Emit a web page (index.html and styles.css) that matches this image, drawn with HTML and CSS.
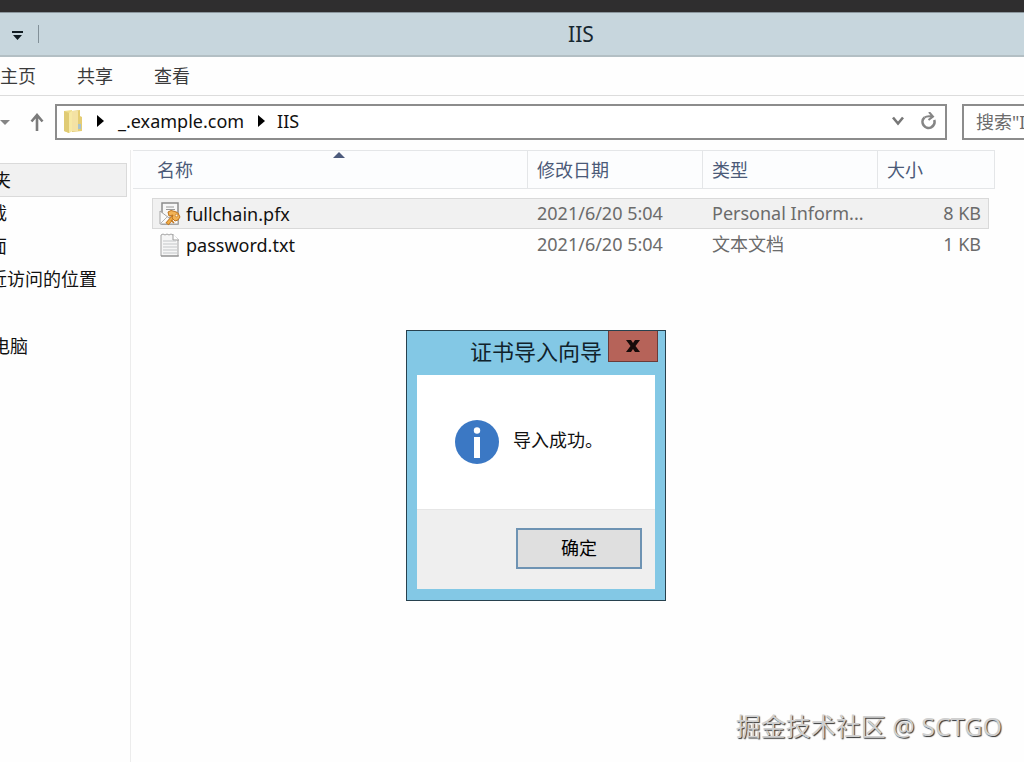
FILE: index.html
```html
<!doctype html>
<html lang="zh-CN">
<head>
  <meta charset="utf-8">
  <title>IIS</title>
  <link rel="stylesheet" href="styles.css">
</head>
<body>
  <div class="desktop-edge"></div>
  <header class="titlebar">
    <button class="quick" aria-label="自定义快速访问工具栏">
      <svg width="12" height="10" viewBox="0 0 12 10"><path d="M0 0h11v2H0zM1 4h9L5.500 9z" fill="#111c22"/></svg>
    </button>
    <h1>IIS</h1>
  </header>
  <nav class="ribbon">
    <a href="#home">主页</a>
    <a href="#share">共享</a>
    <a href="#view">查看</a>
  </nav>
  <div class="toolbar">
    <button class="history" aria-label="最近浏览的位置">
      <svg width="10" height="5" viewBox="0 0 10 5"><path d="M0 0h10L5 5z" fill="#858585"/></svg>
    </button>
    <button class="up" aria-label="向上">
      <svg width="14" height="18" viewBox="0 0 14 18"><path d="M7 18V2M1.500 8.500L7 2l5.500 6.500" fill="none" stroke="#7b7b7b" stroke-width="2.600"/></svg>
    </button>
    <div class="address">
      <svg class="folder" width="20" height="24" viewBox="0 0 20 24">
        <path d="M9 2l8-1v6l2 1v14l-10 1z" fill="#e5cd74"/>
        <path d="M8 2h7v20H8z" fill="#f4e2a4"/>
        <path d="M1 2l8-1v21l-3 2-5-2z" fill="#eedd8c"/>
        <path d="M1 2l5 2v20l-5-2z" fill="#e0cb74"/>
        <path d="M6 4l3-2v20l-3 2z" fill="#f7e9a5"/>
        <path d="M15 15h3v5h-3z" fill="#a9c3cc"/>
      </svg>
      <svg class="sep" width="7" height="12" viewBox="0 0 7 12"><path d="M0 0l7 6-7 6z"/></svg>
      <a href="#example">_.example.com</a>
      <svg class="sep" width="7" height="12" viewBox="0 0 7 12"><path d="M0 0l7 6-7 6z"/></svg>
      <a href="#iis">IIS</a>
      <div class="address-tools">
        <button aria-label="以前的位置">
          <svg width="12" height="10" viewBox="0 0 12 10"><path d="M1 1.500L6 7.500l5-6" fill="none" stroke="#777" stroke-width="2.600"/></svg>
        </button>
        <button aria-label="刷新">
          <svg width="16" height="18" viewBox="0 0 16 18"><path d="M3.500 5.500A6 6 0 1 0 13.200 8" fill="none" stroke="#858585" stroke-width="2.600"/><path d="M3.500 5.500Q6 3.500 11 4.500M8 0l4 4.500L7.500 8" fill="none" stroke="#858585" stroke-width="2"/></svg>
        </button>
      </div>
    </div>
    <input class="search" type="search" aria-label="搜索" placeholder='搜索"IIS"'>
  </div>
  <main class="explorer">
    <nav class="sidebar">
      <a class="group current" href="#favorites">收藏夹</a>
      <a href="#downloads">下载</a>
      <a href="#desktop">桌面</a>
      <a href="#recent">最近访问的位置</a>
      <a class="group computer" href="#computer">这台电脑</a>
    </nav>
    <section class="files">
      <table>
        <colgroup>
          <col class="col-name">
          <col class="col-date">
          <col class="col-type">
          <col class="col-size">
        </colgroup>
        <thead>
          <tr>
            <th class="sorted">名称
              <svg width="12" height="6" viewBox="0 0 12 6"><path d="M6 0l6 6H0z" fill="#4c5b7c"/></svg>
            </th>
            <th>修改日期</th>
            <th>类型</th>
            <th>大小</th>
          </tr>
        </thead>
        <tbody>
          <tr class="selected">
            <td><div class="cell name">
              <svg width="22" height="24" viewBox="0 0 22 24">
                <path d="M3 1h16v21H3z" fill="#f7f7f7" stroke="#8c8c8c" stroke-width="1.500"/>
                <path d="M7 5h8M7 7.500h9" stroke="#9a9a9a"/>
                <path d="M1 9l9 7 9-7v13H1z" fill="#fafafa" stroke="#a5a5a5"/>
                <path d="M1 22l8-8" stroke="#b5b5b5"/>
                <path d="M8 22l7-8" stroke="#bd7420" stroke-width="4"/>
                <path d="M8.500 21.500l7-8" stroke="#f2ad45" stroke-width="2.500"/>
                <path d="M9 10l3-1.500 4 1 3 1.500 2 4-2 3-3 1-3-3 1-3-4 1z" fill="#f2b355" stroke="#bd7420"/>
                <path d="M12 18l3 3" stroke="#bd7420" stroke-width="1.500"/>
                <circle cx="17.500" cy="13.500" r="1.300" fill="#fff3dc" stroke="#bd7420" stroke-width=".7"/>
              </svg>
              fullchain.pfx</div></td>
            <td><div class="cell">2021/6/20 5:04</div></td>
            <td><div class="cell">Personal Inform...</div></td>
            <td><div class="cell size">8 KB</div></td>
          </tr>
          <tr>
            <td><div class="cell name">
              <svg width="22" height="24" viewBox="0 0 22 24">
                <path d="M2 2l2-1 2 1 2-1 2 1 2-1 2 1 5 4v17H2z" fill="#f6f6f6" stroke="#a2a2a2"/>
                <path d="M14 1v6h6" fill="#fff" stroke="#9b9b9b"/>
                <path d="M4 8h13M4 11h14M4 14h14M4 17h14M4 20h14" stroke="#c3c6c8"/>
                <path d="M2 23h18" stroke="#8b8b8b"/>
              </svg>
              password.txt</div></td>
            <td><div class="cell">2021/6/20 5:04</div></td>
            <td><div class="cell">文本文档</div></td>
            <td><div class="cell size">1 KB</div></td>
          </tr>
        </tbody>
      </table>
    </section>
  </main>

  <div class="dialog" role="dialog" aria-labelledby="dialog-title">
    <div class="dialog-title">
      <h2 id="dialog-title">证书导入向导</h2>
      <button class="close" aria-label="关闭">
        <svg width="14" height="12" viewBox="0 0 14 12"><path d="M0 0h5l2 3 2-3h5L9.500 6l4.500 6H9L7 9l-2 3H0l4.500-6z" fill="#160b0a"/></svg>
      </button>
    </div>
    <div class="dialog-body">
      <svg width="44" height="44" viewBox="0 0 44 44"><circle cx="22" cy="22" r="22" fill="#3b78c4"/><circle cx="22" cy="10.500" r="3.200" fill="#fff"/><path d="M19 17h6v21h-6z" fill="#fff"/></svg>
      <p>导入成功。</p>
    </div>
    <div class="dialog-footer">
      <button class="ok">确定</button>
    </div>
  </div>
  <div class="watermark">掘金技术社区 @ SCTGO</div>
</body>
</html>
```
FILE: styles.css
```css
* {
  box-sizing: border-box;
}
body {
  display: flex;
  flex-direction: column;
  min-height: 100vh;
  margin: 0;
  overflow: hidden;
  background: #fefefe;
  color: #111;
  font: 18px/24px "Noto Sans", "Noto Sans CJK SC", sans-serif;
}
a {
  color: inherit;
  text-decoration: none;
}
button {
  padding: 0;
  border: 0;
  background: none;
  font: inherit;
}
svg {
  display: block;
  flex: none;
}
.desktop-edge {
  height: 12px;
  background: #2f2e2f;
}
.titlebar {
  display: flex;
  align-items: center;
  height: 45px;
  border-top: 1px solid #8c979d;
  border-bottom: 2px solid #b3bfc4;
  background: #c7d6dd;
}
.quick {
  width: 39px;
  height: 18px;
  padding: 4px 0 0 12px;
  border-right: 1px solid #829098;
}
.titlebar h1 {
  flex: 1;
  margin: 0;
  padding-left: 99px;
  color: #17272f;
  font-size: 21px;
  font-weight: 400;
  text-align: center;
}
.ribbon {
  display: flex;
  align-items: center;
  gap: 41px;
  height: 39px;
  border-bottom: 1px solid #dcdcdc;
  color: #3b3b3b;
}
.toolbar {
  display: flex;
  align-items: center;
  height: 54px;
  padding-bottom: 2px;
  overflow: hidden;
}
.history {
  width: 30px;
}
.up {
  width: 25px;
}
.address {
  display: flex;
  flex: 1;
  align-items: center;
  height: 36px;
  padding: 0 8px 2px 6px;
  border: 2px solid #8c8c8c;
  background: #fff;
}
.sep {
  margin: 0 14px;
}
.address a + .sep {
  margin-right: 12px;
}
.address-tools {
  display: flex;
  align-items: center;
  gap: 17px;
  margin-left: auto;
}
.search {
  flex: none;
  width: 250px;
  height: 36px;
  margin: 0 -188px 0 15px;
  padding: 0 12px;
  border: 2px solid #8c8c8c;
  border-radius: 0;
  background: #fff;
  font: inherit;
}
.search::placeholder {
  color: #6c6c6c;
}
.explorer {
  display: flex;
  flex: 1;
}
/* the tree is scrolled sideways, its left part is out of view */
.sidebar {
  width: 175px;
  margin-left: -44px;
  padding: 13px 3px 0 0;
  border-right: 1px solid #ececec;
}
.sidebar a {
  display: block;
  padding: 4px 0 5px 15px;
}
.sidebar .group {
  padding-left: 2px;
}
.sidebar .current {
  border: 1px solid #dadada;
  background: #f1f1f1;
  padding: 4px 0;
}
.sidebar .computer {
  padding-left: 0;
  margin-top: 34px;
}
.files {
  flex: 1;
  padding: 0 0 0 2px;
}
table {
  width: 862px;
  border-collapse: separate;
  border-spacing: 0;
  table-layout: fixed;
}
.col-name {
  width: 395px;
}
.col-date,
.col-type {
  width: 175px;
}
.col-size {
  width: 117px;
}
th {
  position: relative;
  height: 39px;
  padding: 0 8px 0 9px;
  border: solid #e4e6e8;
  border-width: 1px 1px 1px 0;
  background: #fcfdfe;
  color: #4b5a78;
  font-weight: 400;
  text-align: left;
}
th.sorted {
  padding-left: 24px;
}
th svg {
  position: absolute;
  top: 1px;
  left: 200px;
}
thead::after {
  content: "";
  display: block;
  height: 9px;
}
td {
  padding: 0;
  color: #6b6b6b;
}
.cell {
  height: 31px;
  padding: 2px 9px;
  border: 1px solid transparent;
  border-width: 1px 0;
  white-space: nowrap;
}
.cell.name {
  display: flex;
  align-items: center;
  gap: 5px;
  margin-left: 19px;
  padding-left: 6px;
  border-left-width: 1px;
  color: #111;
}
.cell.size {
  margin-right: 6px;
  padding-right: 7px;
  border-right-width: 1px;
  text-align: right;
}
.selected .cell {
  border-color: #d9d9d9;
  background: #f1f1f1;
}
.dialog {
  position: absolute;
  top: 330px;
  left: 406px;
  width: 260px;
  padding: 0 10px 11px;
  border: 1px solid #27414e;
  background: #83c8e5;
}
.dialog-title {
  display: flex;
  align-items: flex-start;
  justify-content: flex-end;
  gap: 6px;
  height: 44px;
  margin-right: -3px;
}
.dialog-title h2 {
  margin: 0;
  padding-top: 8px;
  color: #10222b;
  font-size: 22px;
  font-weight: 400;
}
.close {
  display: flex;
  align-items: center;
  justify-content: center;
  width: 50px;
  height: 31px;
  border: 1px solid #6a3a38;
  border-top: 0;
  background: #b66359;
}
.dialog-body {
  display: flex;
  align-items: center;
  gap: 14px;
  height: 134px;
  padding-left: 38px;
  background: #fff;
}
.dialog-body p {
  margin: 0;
  padding-bottom: 4px;
}
.dialog-footer {
  display: flex;
  justify-content: flex-end;
  padding: 18px 13px 20px;
  border-top: 1px solid #e6e6e6;
  background: #efefef;
}
.ok {
  width: 126px;
  height: 41px;
  padding-bottom: 2px;
  border: 2px solid #6e93b3;
  background: #dfdfdf;
}
.watermark {
  position: absolute;
  right: 22px;
  bottom: 21px;
  color: #d0d0d0;
  font-size: 25px;
  line-height: 30px;
  text-shadow: 1px 1px 1px #333;
}
```
